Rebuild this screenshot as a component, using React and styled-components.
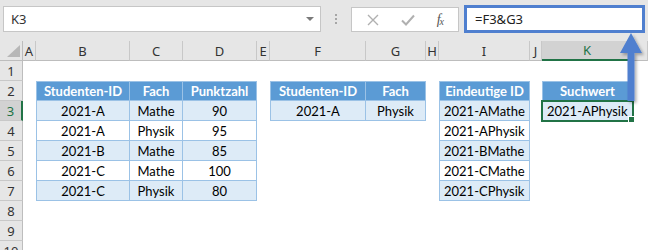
import React from 'react';
import styled, { createGlobalStyle, css } from 'styled-components';

const GlobalStyle = createGlobalStyle`
  html, body {
    margin: 0;
    padding: 0;
    background: #ffffff;
  }
  body {
    width: 648px;
    height: 250px;
    overflow: hidden;
    font-family: "Noto Sans", "Liberation Sans", sans-serif;
  }
`;

const GREEN = '#217346';
const COLS = ['A', 'B', 'C', 'D', 'E', 'F', 'G', 'H', 'I', 'J', 'K', 'L'];
const WIDTHS = '23px 13px 94px 53px 74px 13px 96px 60px 13px 91px 12px 91px 1fr';
const ROWS = 10;
const ACTIVE = { col: 10, row: 3 };

// tables in the sheet: column index (A = 0), first row, rows of values
const tables = [
  {
    col: 1,
    row: 2,
    data: [
      ['Studenten-ID', 'Fach', 'Punktzahl'],
      ['2021-A', 'Mathe', '90'],
      ['2021-A', 'Physik', '95'],
      ['2021-B', 'Mathe', '85'],
      ['2021-C', 'Mathe', '100'],
      ['2021-C', 'Physik', '80'],
    ],
  },
  {
    col: 5,
    row: 2,
    data: [
      ['Studenten-ID', 'Fach'],
      ['2021-A', 'Physik'],
    ],
  },
  {
    col: 8,
    row: 2,
    left: true,
    data: [
      ['Eindeutige ID'],
      ['2021-AMathe'],
      ['2021-APhysik'],
      ['2021-BMathe'],
      ['2021-CMathe'],
      ['2021-CPhysik'],
    ],
  },
  {
    col: 10,
    row: 2,
    left: true,
    data: [['Suchwert'], ['2021-APhysik']],
  },
];

const buildCells = () => {
  const map = {};
  tables.forEach((t) => {
    t.data.forEach((line, r) => {
      line.forEach((text, c) => {
        map[`${t.col + c}:${t.row + r}`] = {
          text,
          kind: r === 0 ? 'head' : r % 2 === 1 ? 'band' : 'plain',
          left: t.left && r > 0,
          first: c === 0,
          top: r === 0,
        };
      });
    });
  });
  return map;
};

const Window = styled.div`
  position: relative;
  width: 648px;
  height: 250px;
  overflow: hidden;
  background: #ffffff;
`;

const Toolbar = styled.div`
  display: flex;
  align-items: flex-start;
  height: 41px;
  padding: 6px 0 0 3px;
  box-sizing: border-box;
  background: #e6e6e6;
`;

const NameBox = styled.div`
  display: flex;
  align-items: center;
  justify-content: space-between;
  width: 318px;
  height: 26px;
  box-sizing: border-box;
  padding: 0 6px 0 7px;
  background: #ffffff;
  border: 1px solid #c6c6c6;
  font-size: 13px;
  color: #333333;
`;

const Caret = styled.span`
  width: 0;
  height: 0;
  border-left: 4px solid transparent;
  border-right: 4px solid transparent;
  border-top: 4px solid #7a7a7a;
`;

const Grip = styled.div`
  display: flex;
  flex-direction: column;
  gap: 2px;
  width: 30px;
  align-items: center;
  padding-top: 8px;

  span {
    width: 2px;
    height: 2px;
    background: #a6a6a6;
  }
`;

const FxButtons = styled.div`
  display: flex;
  align-items: center;
  justify-content: space-around;
  width: 108px;
  height: 25px;
  margin-top: 1px;
  box-sizing: border-box;
  padding: 0 4px;
  background: #ffffff;
  border: 1px solid #c6c6c6;
`;

const Fx = styled.span`
  font-family: "Liberation Serif", "DejaVu Serif", serif;
  font-style: italic;
  font-size: 14px;
  color: #555555;
  letter-spacing: -1px;

  sub {
    font-size: 10px;
    vertical-align: -1px;
  }
`;

const FormulaInput = styled.div`
  display: flex;
  align-items: center;
  width: 181px;
  height: 28px;
  margin: -1px 0 0 5px;
  box-sizing: border-box;
  padding-left: 8px;
  background: #ffffff;
  border: 3px solid #4f7fcf;
  font-size: 13px;
  color: #222222;
`;

const Sheet = styled.div`
  display: grid;
  grid-template-columns: ${WIDTHS};
  grid-auto-rows: 20px;
`;

const Corner = styled.div`
  position: relative;
  background: #e6e6e6;
  border-right: 1px solid #bdbdbd;
  border-bottom: 1px solid #bdbdbd;
  box-sizing: border-box;

  &::after {
    content: '';
    position: absolute;
    right: 2px;
    bottom: 3px;
    width: 0;
    height: 0;
    border-left: 13px solid transparent;
    border-bottom: 12px solid #b7b7b7;
  }
`;

const ColHead = styled.div`
  display: flex;
  align-items: center;
  justify-content: center;
  box-sizing: border-box;
  background: ${(p) => (p.$active ? '#d2d2d2' : '#e6e6e6')};
  border-right: 1px solid #c8c8c8;
  border-bottom: ${(p) => (p.$active ? `2px solid ${GREEN}` : '1px solid #bdbdbd')};
  font-size: 13px;
  color: ${(p) => (p.$active ? GREEN : '#333333')};
`;

const RowHead = styled.div`
  display: flex;
  align-items: center;
  justify-content: center;
  box-sizing: border-box;
  background: ${(p) => (p.$active ? '#d2d2d2' : '#e6e6e6')};
  border-bottom: 1px solid #c8c8c8;
  border-right: ${(p) => (p.$active ? `2px solid ${GREEN}` : '1px solid #bdbdbd')};
  font-size: 13px;
  color: ${(p) => (p.$active ? GREEN : '#333333')};
`;

const kinds = {
  head: css`
    background: #5b9bd5;
    color: #ffffff;
    font-weight: 700;
  `,
  band: css`
    background: #ddebf7;
    color: #000000;
  `,
  plain: css`
    background: #ffffff;
    color: #000000;
  `,
};

const Cell = styled.div`
  position: relative;
  display: flex;
  align-items: center;
  justify-content: ${(p) => (p.$left ? 'flex-start' : 'center')};
  box-sizing: border-box;
  padding: 0 ${(p) => (p.$left ? '0 0 4px' : '0')};
  font-family: Lato, "Liberation Sans", sans-serif;
  font-size: 13px;
  white-space: nowrap;
  ${(p) => p.$kind && kinds[p.$kind]}
  ${(p) =>
    p.$kind &&
    css`
      border-right: 1px solid #9bc2e6;
      border-bottom: 1px solid #9bc2e6;
      border-left: ${p.$first ? '1px solid #9bc2e6' : 'none'};
      border-top: ${p.$top ? '1px solid #9bc2e6' : 'none'};
    `}
  ${(p) =>
    p.$selected &&
    css`
      outline: 2px solid ${GREEN};
      outline-offset: -1px;
      z-index: 1;

      &::after {
        content: '';
        position: absolute;
        right: -3px;
        bottom: -3px;
        width: 5px;
        height: 5px;
        background: ${GREEN};
        border: 1px solid #ffffff;
      }
    `}
`;

const Arrow = styled.svg`
  position: absolute;
  left: 617px;
  top: 30px;
  z-index: 2;
`;

const App = () => {
  const cells = buildCells();

  return (
    <Window>
      <GlobalStyle />
      <Toolbar>
        <NameBox>
          K3
          <Caret />
        </NameBox>
        <Grip>
          <span />
          <span />
          <span />
        </Grip>
        <FxButtons>
          <svg width="12" height="12" viewBox="0 0 12 12">
            <path d="M1 1L11 11M11 1L1 11" stroke="#b0b0b0" strokeWidth="1.4" fill="none" />
          </svg>
          <svg width="14" height="12" viewBox="0 0 14 12">
            <path d="M1 6.5L5 10.5L13 1.5" stroke="#b0b0b0" strokeWidth="2" fill="none" />
          </svg>
          <Fx>
            f<sub>x</sub>
          </Fx>
        </FxButtons>
        <FormulaInput>=F3&amp;G3</FormulaInput>
      </Toolbar>

      <Sheet>
        <Corner />
        {COLS.map((c, i) => (
          <ColHead key={c} $active={i === ACTIVE.col}>
            {c === 'L' ? '' : c}
          </ColHead>
        ))}
        {Array.from({ length: ROWS }, (_, r) => {
          const row = r + 1;
          return (
            <React.Fragment key={row}>
              <RowHead $active={row === ACTIVE.row}>{row}</RowHead>
              {COLS.map((c, i) => {
                const cell = cells[`${i}:${row}`];
                return (
                  <Cell
                    key={c}
                    $kind={cell?.kind}
                    $left={cell?.left}
                    $first={cell?.first}
                    $top={cell?.top}
                    $selected={i === ACTIVE.col && row === ACTIVE.row}
                  >
                    {cell?.text}
                  </Cell>
                );
              })}
            </React.Fragment>
          );
        })}
      </Sheet>

      <Arrow width="30" height="76" viewBox="0 0 30 76">
        <defs>
          <filter id="shade" x="-30%" y="-10%" width="160%" height="130%">
            <feDropShadow dx="2" dy="2" stdDeviation="1.5" floodColor="#000" floodOpacity="0.3" />
          </filter>
        </defs>
        <path
          d="M14 3 L25 23 L17.5 23 L17.5 71 L10.5 71 L10.5 23 L3 23 Z"
          fill="#4f7fcf"
          filter="url(#shade)"
        />
      </Arrow>
    </Window>
  );
};

export default App;
